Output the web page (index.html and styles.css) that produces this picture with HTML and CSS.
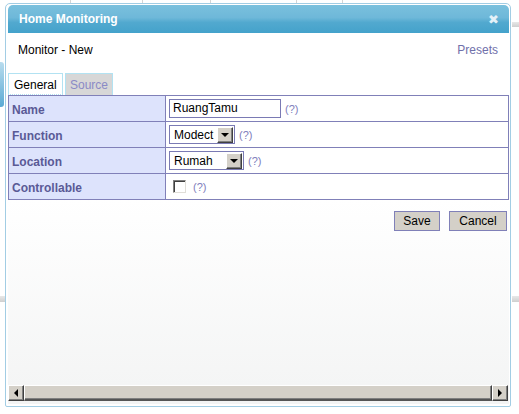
FILE: index.html
```html
<!DOCTYPE html>
<html>
<head>
<meta charset="utf-8">
<link rel="stylesheet" href="styles.css">
</head>
<body>
<div class="backdrop">
  <div class="top-strip">
    <span class="vline l1"></span><span class="vline l2"></span><span class="vline l3"></span><span class="vline l4"></span><span class="vline l5"></span>
  </div>
  <div class="side-tab"></div>
  <div class="gray-bar left"></div>
  <div class="gray-bar right"></div>
  <div class="gray-bar top-right"></div>
</div>

<div class="dialog">
  <div class="titlebar">
    <span class="title">Home Monitoring</span>
    <span class="close">&#x2716;</span>
  </div>
  <div class="dialog-body">
    <div class="head-row">
      <span class="heading">Monitor - New</span>
      <span class="presets">Presets</span>
    </div>
    <div class="tabs">
      <span class="tab active">General</span>
      <span class="tab">Source</span>
    </div>
    <table class="form">
      <tr>
        <th>Name</th>
        <td><span class="field"><span class="input">RuangTamu</span><span class="help">(?)</span></span></td>
      </tr>
      <tr>
        <th>Function</th>
        <td><span class="field"><span class="select w-modect"><span class="sel-text">Modect</span><span class="sel-btn"><span class="arrow-down"></span></span></span><span class="help">(?)</span></span></td>
      </tr>
      <tr>
        <th>Location</th>
        <td><span class="field"><span class="select w-rumah"><span class="sel-text">Rumah</span><span class="sel-btn"><span class="arrow-down"></span></span></span><span class="help">(?)</span></span></td>
      </tr>
      <tr>
        <th>Controllable</th>
        <td><span class="field"><span class="checkbox"></span><span class="help">(?)</span></span></td>
      </tr>
    </table>
    <div class="actions">
      <span class="btn save">Save</span>
      <span class="btn cancel">Cancel</span>
    </div>
    <div class="spacer"></div>
    <div class="hscroll">
      <span class="sb-btn"><span class="arrow-left"></span></span>
      <span class="sb-track"></span>
      <span class="sb-btn"><span class="arrow-right"></span></span>
      <span class="grip"></span>
    </div>
  </div>
</div>
</body>
</html>
```
FILE: styles.css
```css
html, body {
  margin: 0;
  padding: 0;
}
body {
  width: 519px;
  height: 414px;
  overflow: hidden;
  position: relative;
  background: #ffffff;
  font-family: "Liberation Sans", Arial, sans-serif;
  font-size: 12px;
}

/* backdrop page fragments */
.backdrop {
  position: absolute;
  inset: 0;
}
.top-strip {
  position: absolute;
  left: 0; top: 0;
  width: 519px; height: 4px;
}
.vline {
  position: absolute;
  top: 0;
  width: 1px;
  height: 4px;
  background: #d4d4d4;
}
.l1 { left: 70px; }
.l2 { left: 142px; }
.l3 { left: 210px; }
.l4 { left: 296px; }
.l5 { left: 342px; }
.side-tab {
  position: absolute;
  left: 0; top: 62px;
  width: 4px; height: 45px;
  background: linear-gradient(#b8dcee, #5aaad4);
  border-radius: 0 3px 3px 0;
}
.gray-bar {
  position: absolute;
  height: 6px;
  background: linear-gradient(#e8e8e8, #cfcfcf);
}
.gray-bar.left { left: 0; top: 296px; width: 5px; }
.gray-bar.right { right: 0; top: 296px; width: 7px; }
.gray-bar.top-right { right: 0; top: 22px; width: 7px; height: 5px; }

/* dialog */
.dialog {
  position: absolute;
  left: 5px;
  top: 3px;
  width: 506px;
  height: 404px;
  box-sizing: border-box;
  border: 1px solid #a2cde4;
  border-radius: 5px 5px 2px 2px;
  padding: 1px 1px 2px 2px;
  background: #ffffff;
  display: flex;
  flex-direction: column;
}
.titlebar {
  height: 28px;
  flex: none;
  border-radius: 5px 5px 0 0;
  background: linear-gradient(#7ac0dd 0%, #6eb8d9 45%, #52a9cf 62%, #44a2cb 100%);
  display: flex;
  align-items: center;
  justify-content: space-between;
  padding: 0 10px 0 11px;
  box-sizing: border-box;
}
.title {
  color: #ffffff;
  font-weight: bold;
  font-size: 12px;
}
.close {
  color: #e4f1f8;
  font-size: 13px;
  font-weight: bold;
  font-family: "DejaVu Sans", sans-serif;
  margin-top: 1px;
}
.dialog-body {
  flex: 1;
  display: flex;
  flex-direction: column;
  background: linear-gradient(#ffffff 0%, #ffffff 45%, #f3f4f4 100%);
}
.head-row {
  display: flex;
  justify-content: space-between;
  padding: 10px 11px 0 10px;
  line-height: 14px;
}
.heading { color: #000000; }
.presets { color: #7070aa; }

.tabs {
  display: flex;
  gap: 2px;
  margin-top: 16px;
  height: 22px;
}
.tab {
  box-sizing: border-box;
  height: 22px;
  border: 1px solid #b2e2f2;
  border-bottom: none;
  padding: 3px 4px 0 4px;
  line-height: 16px;
  background: #d7d7d7;
  color: #8a8ac6;
}
.tab.active {
  background: #ffffff;
  color: #000000;
  border-bottom: 1px dotted #b2e2f2;
  width: 55px;
  padding-left: 5px;
}

.form {
  border-collapse: collapse;
  width: 501px;
  border: 1px solid #8080b8;
}
.form th, .form td {
  box-sizing: border-box;
  border: 1px solid #8080b8;
  height: 26px;
  padding: 0;
  vertical-align: middle;
}
.form th {
  width: 157px;
  background: #dde3fc;
  color: #5a5a96;
  font-weight: bold;
  text-align: left;
  padding: 2px 0 0 3px;
  font-size: 12px;
}
.form td {
  padding: 0 0 0 3px;
}
.field {
  display: flex;
  align-items: center;
}
.input {
  box-sizing: border-box;
  width: 112px;
  height: 19px;
  border: 1px solid #7a7ab4;
  background: #ffffff;
  padding-left: 3px;
  line-height: 17px;
  color: #000;
}
.help {
  color: #8080bc;
  font-size: 11px;
  margin-left: 4px;
}
.select {
  box-sizing: border-box;
  height: 19px;
  border: 1px solid #7a7ab4;
  background: #ffffff;
  display: flex;
  align-items: center;
  justify-content: space-between;
  padding: 0 1px 0 4px;
}
.w-modect { width: 66px; }
.w-rumah { width: 75px; }
.sel-text { line-height: 16px; }
.sel-btn {
  box-sizing: border-box;
  width: 16px;
  height: 16px;
  background: #d4d0c8;
  border-top: 1px solid #ffffff;
  border-left: 1px solid #ffffff;
  border-right: 1px solid #404040;
  border-bottom: 1px solid #404040;
  box-shadow: inset -1px -1px 0 #808080;
  display: flex;
  align-items: center;
  justify-content: center;
}
.arrow-down {
  width: 0; height: 0;
  border-left: 4px solid transparent;
  border-right: 4px solid transparent;
  border-top: 4px solid #000;
}
.checkbox {
  box-sizing: border-box;
  width: 13px;
  height: 13px;
  margin-left: 4px;
  background: #ffffff;
  border-top: 1px solid #808080;
  border-left: 1px solid #808080;
  border-right: 1px solid #e0ded8;
  border-bottom: 1px solid #e0ded8;
  box-shadow: inset 1px 1px 0 #404040;
}
.field .checkbox + .help { margin-left: 7px; }

.actions {
  display: flex;
  justify-content: flex-end;
  gap: 9px;
  margin-top: 11px;
  padding-right: 2px;
}
.btn {
  box-sizing: border-box;
  height: 20px;
  background: #d4d0c8;
  border: 1px solid #8080b8;
  color: #000;
  line-height: 18px;
  text-align: center;
}
.save { width: 46px; }
.cancel { width: 58px; }

.spacer { flex: 1; }

.hscroll {
  display: flex;
  height: 16px;
  margin: 0 1px 3px 0;
  background: #d4d0c8;
}
.sb-btn {
  box-sizing: border-box;
  width: 16px;
  height: 16px;
  background: #d4d0c8;
  border-top: 1px solid #ffffff;
  border-left: 1px solid #ffffff;
  border-right: 1px solid #404040;
  border-bottom: 1px solid #404040;
  box-shadow: inset -1px -1px 0 #808080;
  display: flex;
  align-items: center;
  justify-content: center;
}
.sb-track {
  flex: 1;
  box-sizing: border-box;
  height: 16px;
  border-top: 1px solid #ffffff;
  border-left: 1px solid #ffffff;
  border-right: 1px solid #404040;
  border-bottom: 2px solid #555555;
  box-shadow: inset -1px -1px 0 #808080;
}
.arrow-left {
  width: 0; height: 0;
  border-top: 4px solid transparent;
  border-bottom: 4px solid transparent;
  border-right: 4px solid #000;
}
.arrow-right {
  width: 0; height: 0;
  border-top: 4px solid transparent;
  border-bottom: 4px solid transparent;
  border-left: 4px solid #000;
}
.grip {
  width: 0;
}
```
